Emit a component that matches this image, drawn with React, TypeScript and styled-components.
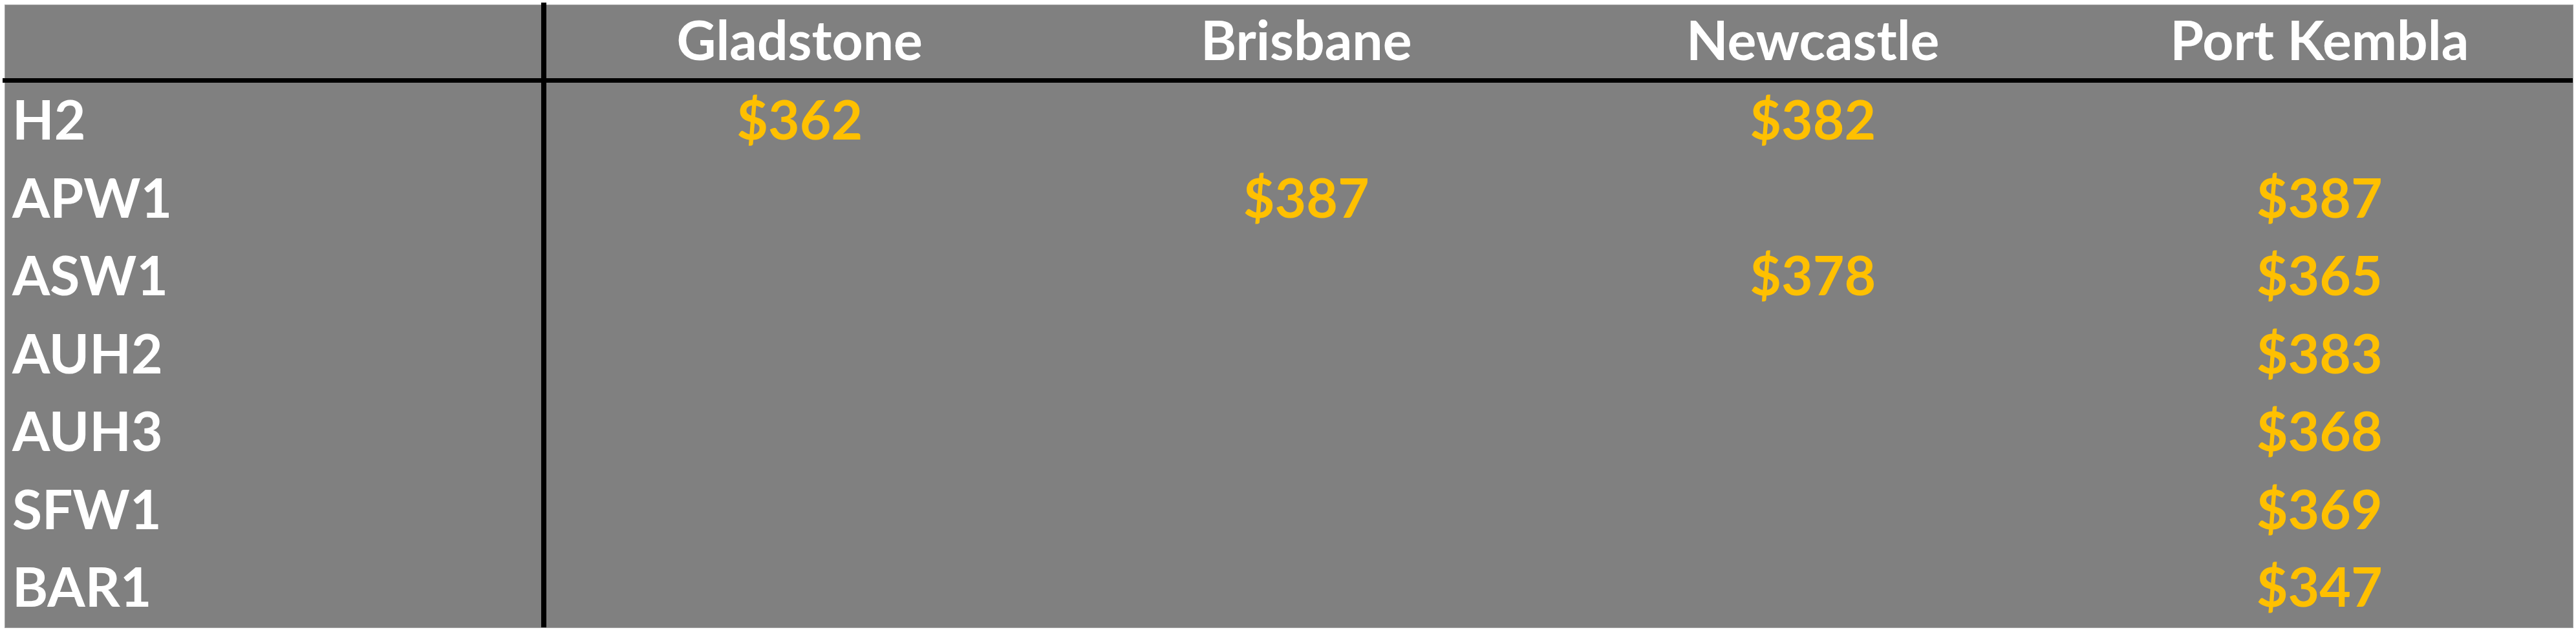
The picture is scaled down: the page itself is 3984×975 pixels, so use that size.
import React from 'react';
import styled, { createGlobalStyle } from 'styled-components';

const GlobalStyle = createGlobalStyle`
  html, body {
    margin: 0;
    padding: 0;
    background: #ffffff;
  }
  body {
    font-family: Lato, "Liberation Sans", sans-serif;
  }
`;

const columns = ['Gladstone', 'Brisbane', 'Newcastle', 'Port Kembla'];

const rows: { name: string; prices: (string | null)[] }[] = [
  { name: 'H2', prices: ['$362', null, '$382', null] },
  { name: 'APW1', prices: [null, '$387', null, '$387'] },
  { name: 'ASW1', prices: [null, null, '$378', '$365'] },
  { name: 'AUH2', prices: [null, null, null, '$383'] },
  { name: 'AUH3', prices: [null, null, null, '$368'] },
  { name: 'SFW1', prices: [null, null, null, '$369'] },
  { name: 'BAR1', prices: [null, null, null, '$347'] },
];

export default function App() {
  return (
    <>
      <GlobalStyle />
      <Page>
        <PriceTable>
          <VerticalRule />
          <HorizontalRule />
          <HeaderCell $col={1} />
          {columns.map((c, i) => (
            <HeaderCell key={c} $col={i + 3}>
              {c}
            </HeaderCell>
          ))}
          {rows.map((r, ri) => (
            <React.Fragment key={r.name}>
              <RowLabel $row={ri + 3}>{r.name}</RowLabel>
              {r.prices.map((p, ci) => (
                <PriceCell key={ci} $row={ri + 3} $col={ci + 3}>
                  {p}
                </PriceCell>
              ))}
            </React.Fragment>
          ))}
        </PriceTable>
      </Page>
    </>
  );
}

const Page = styled.div`
  width: 3984px;
  height: 975px;
  box-sizing: border-box;
  padding: 8px 5px 4px 8px;
`;

const PriceTable = styled.div`
  width: 100%;
  height: 100%;
  box-sizing: border-box;
  display: grid;
  grid-template-columns: 829px 8px repeat(4, 1fr);
  grid-template-rows: 113px 7px repeat(7, 1fr);
  background-color: #808080;
  box-shadow: 0 0 0 1px #a2a2a2;
  font-weight: 700;
  font-size: 84px;
  line-height: 84px;
  color: #ffffff;
`;

const VerticalRule = styled.div`
  grid-column: 2;
  grid-row: 1 / -1;
  margin-top: -4px;
  background-color: #000000;
`;

const HorizontalRule = styled.div`
  grid-column: 1 / -1;
  grid-row: 2;
  margin-left: -4px;
  background-color: #000000;
`;

const HeaderCell = styled.div<{ $col: number }>`
  grid-row: 1;
  grid-column: ${({ $col }) => $col};
  display: flex;
  align-items: flex-end;
  justify-content: center;
  padding-bottom: 18px;
  white-space: nowrap;
`;

const RowLabel = styled.div<{ $row: number }>`
  grid-row: ${({ $row }) => $row};
  grid-column: 1;
  display: flex;
  align-items: flex-end;
  padding: 0 0 22px 11px;
`;

const PriceCell = styled.div<{ $row: number; $col: number }>`
  grid-row: ${({ $row }) => $row};
  grid-column: ${({ $col }) => $col};
  display: flex;
  align-items: flex-end;
  justify-content: center;
  padding-bottom: 22px;
  color: #ffc000;
`;
